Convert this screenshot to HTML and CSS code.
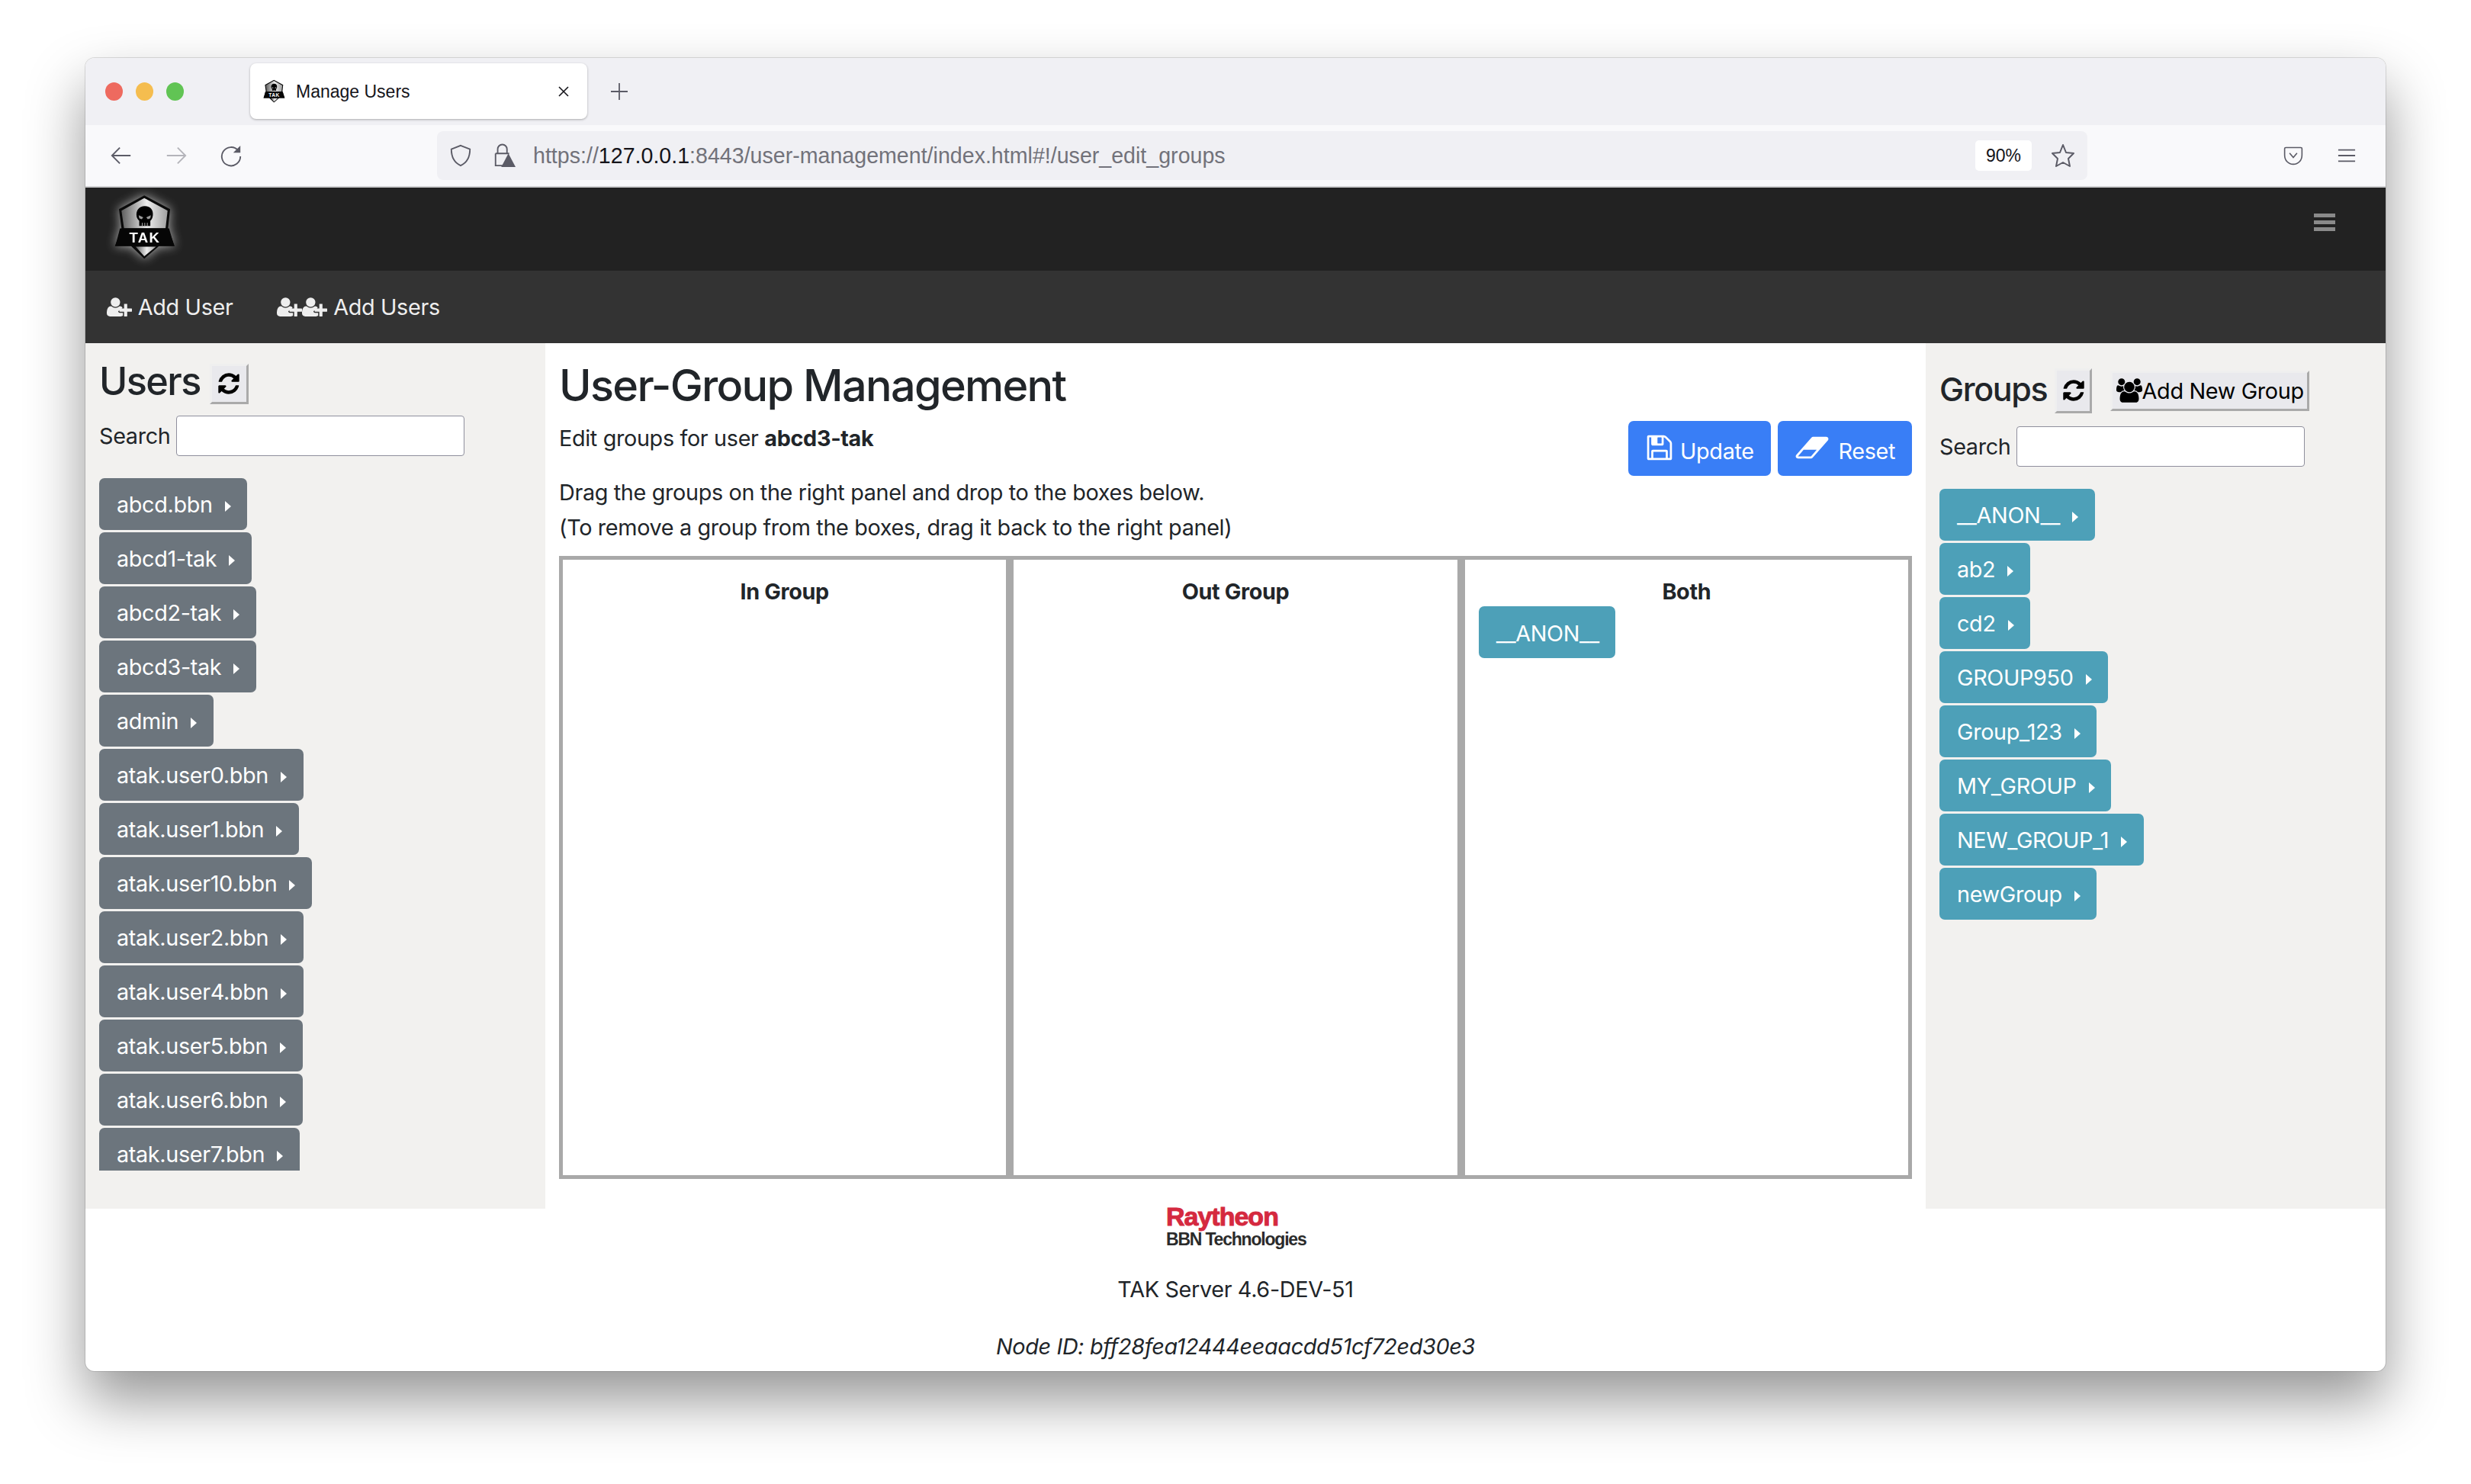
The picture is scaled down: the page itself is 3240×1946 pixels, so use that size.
FILE: index.html
```html
<!DOCTYPE html>
<html lang="en">
<head>
    <meta charset="UTF-8">
    <meta name="viewport" content="width=device-width, initial-scale=1.0">
    <title>Manage Users</title>
    <link rel="stylesheet" href="styles.css">
</head>
<body>

<svg class="icon-defs" width="0" height="0">
    <symbol id="i-refresh" viewBox="0 0 1792 1792"><path d="M1639 1056q0 5-1 7-64 268-268 434.5t-478 166.5q-146 0-282.5-55t-243.5-157l-129 129q-19 19-45 19t-45-19-19-45v-448q0-26 19-45t45-19h448q26 0 45 19t19 45-19 45l-137 137q71 66 161 102t187 36q134 0 250-65t186-179q11-17 53-117 8-23 30-23h192q13 0 22.5 9.5t9.5 22.5zm25-800v448q0 26-19 45t-45 19h-448q-26 0-45-19t-19-45 19-45l138-138q-148-137-349-137-134 0-250 65t-186 179q-11 17-53 117-8 23-30 23h-199q-13 0-22.5-9.5t-9.5-22.5v-7q65-268 270-434.5t480-166.5q146 0 284 55.5t245 156.5l130-129q19-19 45-19t45 19 19 45z"/></symbol>
    <symbol id="i-user-plus" viewBox="0 0 2048 1792"><path d="M704 896q-159 0-271.500-112.500t-112.500-271.500 112.500-271.500 271.500-112.500 271.500 112.500 112.500 271.500-112.500 271.500-271.500 112.500zm960 128h352q13 0 22.500 9.500t9.500 22.500v192q0 13-9.500 22.500t-22.500 9.500h-352v352q0 13-9.500 22.500t-22.500 9.500h-192q-13 0-22.500-9.500t-9.500-22.500v-352h-352q-13 0-22.500-9.500t-9.500-22.500v-192q0-13 9.500-22.500t22.500-9.500h352v-352q0-13 9.500-22.500t22.500-9.500h192q13 0 22.500 9.500t9.500 22.500v352zm-736 224q0 52 38 90t90 38h256v238q-68 50-171 50h-874q-121 0-194-69t-73-190q0-53 3.500-103.500t14-109 26.500-108.500 43-97.500 62-81 85.500-53.500 111.500-20q19 0 39 17 79 61 154.500 91.500t164.500 30.500 164.500-30.500 154.500-91.500q20-17 39-17 78 0 133 33t86 99z"/></symbol>
    <symbol id="i-users" viewBox="0 0 1920 1792"><path d="M593 896q-162 5-265 128h-134q-82 0-138-40.500t-56-118.500q0-353 124-353 6 0 43.500 21t97.500 42.500 119 21.500q67 0 133-23-5 37-5 66 0 139 81 256zm1071 637q0 120-73 189.500t-194 69.500h-874q-121 0-194-69.500t-73-189.500q0-53 3.500-103.500t14-109 26.500-108.500 43-97.500 62-81 85.500-53.500 111.500-20q10 0 43 21.500t73 48 107 48 135 21.500 135-21.500 107-48 73-48 43-21.500q61 0 111.500 20t85.500 53.500 62 81 43 97.500 26.500 108.500 14 109 3.500 103.500zm-1024-1277q0 106-75 181t-181 75-181-75-75-181 75-181 181-75 181 75 75 181zm704 384q0 159-112.500 271.500t-271.500 112.500-271.500-112.500-112.500-271.500 112.500-271.500 271.500-112.500 271.500 112.500 112.500 271.500zm576 225q0 78-56 118.500t-138 40.500h-134q-103-123-265-128 81-117 81-256 0-29-5-66 66 23 133 23 59 0 119-21.500t97.500-42.500 43.500-21q124 0 124 353zm-128-609q0 106-75 181t-181 75-181-75-75-181 75-181 181-75 181 75 75 181z"/></symbol>
    <symbol id="i-save" viewBox="0 0 1792 1792"><path d="M512 1536h768v-384h-768v384zm896 0h128v-896q0-14-10-38.500t-20-34.500l-281-281q-10-10-34-20t-39-10v416q0 40-28 68t-68 28h-576q-40 0-68-28t-28-68v-416h-128v1280h128v-416q0-40 28-68t68-28h832q40 0 68 28t28 68v416zm-384-928v-320q0-13-9.500-22.500t-22.500-9.500h-192q-13 0-22.500 9.500t-9.500 22.500v320q0 13 9.500 22.500t22.500 9.500h192q13 0 22.500-9.500t9.500-22.500zm640 32v928q0 40-28 68t-68 28h-1344q-40 0-68-28t-28-68v-1344q0-40 28-68t68-28h928q40 0 88 20t76 48l280 280q28 28 48 76t20 88z"/></symbol>
    <symbol id="i-eraser" viewBox="0 0 2048 1792"><path d="M960 1408l336-384h-768l-336 384h768zm1013-1077q15 34 9.500 71.500t-30.500 65.500l-896 1024q-38 44-96 44h-768q-38 0-69.500-20.500t-47.500-54.500q-15-34-9.500-71.500t30.500-65.500l896-1024q38-44 96-44h768q38 0 70 20.500t47 54.500z"/></symbol>
    <symbol id="i-shield" viewBox="60 22 245 256">
        <path d="M180 26 L282 80 L274 155 L300 226 L238 226 L180 276 L128 226 L64 226 L90 155 L80 80 Z" fill="#0a0a0a"/>
        <path d="M180 36 L272 86 L264 155 L100 155 L90 86 Z" fill="url(#shieldFill)"/>
        <path d="M146 228 L226 228 L180 266 Z" fill="url(#shieldFill)"/>
        <path d="M182 68 C205 68 216 84 214 104 C213 116 208 122 204 126 L204 146 L160 146 L160 126 C154 120 149 114 149 102 C149 84 160 68 182 68 Z" fill="#000"/>
        <path d="M158 104 L176 112 L170 120 L160 116 Z M206 104 L188 112 L194 120 L204 116 Z" fill="#999"/>
        <path d="M172 134 V146 M182 134 V146 M192 134 V146" stroke="#aaa" stroke-width="3"/>
        <path d="M84 156 L278 156 L298 225 L66 225 Z" fill="#060606"/>
    </symbol>
    <linearGradient id="shieldFill" x1="0" y1="0" x2="1" y2="0">
        <stop offset="0" stop-color="#5e5e5e"/>
        <stop offset="0.55" stop-color="#eeeeee"/>
        <stop offset="1" stop-color="#a0a0a0"/>
    </linearGradient>
</svg>

<div class="window">

    <div class="tabbar">
        <div class="lights">
            <span class="light red"></span>
            <span class="light yellow"></span>
            <span class="light green"></span>
        </div>
        <div class="tab">
            <svg class="tab-icon" viewBox="60 22 245 256"><use href="#i-shield" x="60" y="22" width="245" height="256"/><text x="182" y="212" class="tak-word">TAK</text></svg>
            <span class="tab-title">Manage Users</span>
            <svg class="tab-close" viewBox="0 0 16 16"><path d="M2 2 L14 14 M14 2 L2 14"/></svg>
        </div>
        <svg class="new-tab" viewBox="0 0 24 24"><path d="M12 1 V23 M1 12 H23"/></svg>
    </div>

    <div class="toolbar">
        <svg class="tool-icon back" viewBox="0 0 32 32"><path d="M29 16 H4 M14 5 L3 16 L14 27"/></svg>
        <svg class="tool-icon forward" viewBox="0 0 32 32"><path d="M3 16 H28 M18 5 L29 16 L18 27"/></svg>
        <svg class="tool-icon reload" viewBox="0 0 32 32"><path d="M26 9 A13 13 0 1 0 29 17"/><path class="solid" d="M29 2 V12 H19 Z"/></svg>
        <div class="urlbar">
            <svg class="tool-icon shield" viewBox="0 0 32 32"><path d="M16 2 L29 7 C29 18 25 26 16 30 C7 26 3 18 3 7 Z"/></svg>
            <svg class="tool-icon lock" viewBox="0 0 32 36"><path d="M7 15 V9 A6.500 6.500 0 0 1 20 9 V15 M4 15 H23 M4 15 V32 H14"/><path class="solid" d="M22 15 L32 34 H12 Z"/></svg>
            <div class="url"><span class="url-dim">https://</span>127.0.0.1<span class="url-dim">:8443/user-management/index.html#!/user_edit_groups</span></div>
            <div class="zoom-chip">90%</div>
            <svg class="tool-icon star" viewBox="0 0 32 32"><path d="M16 2 L20 12 L30 13 L23 20 L25 30 L16 25 L7 30 L9 20 L2 13 L12 12 Z"/></svg>
        </div>
        <svg class="tool-icon pocket" viewBox="0 0 32 32"><path d="M4 3 H28 A2 2 0 0 1 30 5 V15 C30 24 24 30 16 30 C8 30 2 24 2 15 V5 A2 2 0 0 1 4 3 Z M10 12 L16 19 L22 12"/></svg>
        <svg class="tool-icon app-menu" viewBox="0 0 26 20"><path d="M1 2 H25 M1 10 H25 M1 18 H25"/></svg>
    </div>

    <nav class="navbar">
        <svg class="navbar-logo" viewBox="60 22 245 256"><use href="#i-shield" x="60" y="22" width="245" height="256"/><text x="182" y="212" class="tak-word">TAK</text></svg>
        <span class="navbar-toggler"><i></i><i></i><i></i></span>
    </nav>

    <div class="subnav">
        <a class="subnav-link"><svg class="fa user-plus"><use href="#i-user-plus"/></svg> Add User</a>
        <a class="subnav-link"><svg class="fa user-plus"><use href="#i-user-plus"/></svg><svg class="fa user-plus"><use href="#i-user-plus"/></svg> Add Users</a>
    </div>

    <div class="content">
        <aside class="side users-side">
            <div class="side-head">
                <h3 class="users-title">Users</h3>
                <button class="plain-btn refresh-btn"><svg class="fa"><use href="#i-refresh"/></svg></button>
            </div>
            <div class="search-row">
                <label>Search</label>
                <input type="text" class="search-input">
            </div>
            <div class="btn-list">
                <button class="btn btn-secondary">abcd.bbn</button>
                <button class="btn btn-secondary">abcd1-tak</button>
                <button class="btn btn-secondary">abcd2-tak</button>
                <button class="btn btn-secondary">abcd3-tak</button>
                <button class="btn btn-secondary">admin</button>
                <button class="btn btn-secondary">atak.user0.bbn</button>
                <button class="btn btn-secondary">atak.user1.bbn</button>
                <button class="btn btn-secondary">atak.user10.bbn</button>
                <button class="btn btn-secondary">atak.user2.bbn</button>
                <button class="btn btn-secondary">atak.user4.bbn</button>
                <button class="btn btn-secondary">atak.user5.bbn</button>
                <button class="btn btn-secondary">atak.user6.bbn</button>
                <button class="btn btn-secondary">atak.user7.bbn</button>
            </div>
        </aside>

        <main class="main">
            <h2 class="main-title">User-Group Management</h2>
            <div class="main-row">
                <div class="edit-line">Edit groups for user <b>abcd3-tak</b></div>
                <div class="actions">
                    <button class="action-btn"><svg class="fa save"><use href="#i-save"/></svg> Update</button>
                    <button class="action-btn"><svg class="fa eraser"><use href="#i-eraser"/></svg> Reset</button>
                </div>
            </div>
            <p class="hint">Drag the groups on the right panel and drop to the boxes below.<br>(To remove a group from the boxes, drag it back to the right panel)</p>
            <div class="drop-boxes">
                <div class="drop-box"><div class="drop-title">In Group</div></div>
                <div class="drop-box"><div class="drop-title">Out Group</div></div>
                <div class="drop-box">
                    <div class="drop-title">Both</div>
                    <button class="btn btn-info no-caret">__ANON__</button>
                </div>
            </div>
        </main>

        <aside class="side groups-side">
            <div class="side-head">
                <h3 class="groups-title">Groups</h3>
                <button class="plain-btn refresh-btn group-refresh"><svg class="fa"><use href="#i-refresh"/></svg></button>
                <button class="plain-btn add-group"><svg class="fa users"><use href="#i-users"/></svg>Add New Group</button>
            </div>
            <div class="search-row">
                <label>Search</label>
                <input type="text" class="search-input">
            </div>
            <div class="btn-list">
                <button class="btn btn-info">__ANON__</button>
                <button class="btn btn-info">ab2</button>
                <button class="btn btn-info">cd2</button>
                <button class="btn btn-info">GROUP950</button>
                <button class="btn btn-info">Group_123</button>
                <button class="btn btn-info">MY_GROUP</button>
                <button class="btn btn-info">NEW_GROUP_1</button>
                <button class="btn btn-info">newGroup</button>
            </div>
        </aside>
    </div>

    <footer class="footer">
        <div class="brand">
            <div class="brand-red">Raytheon</div>
            <div class="brand-black">BBN Technologies</div>
        </div>
        <div class="version">TAK Server 4.6-DEV-51</div>
        <div class="node"><i>Node ID: bff28fea12444eeaacdd51cf72ed30e3</i></div>
    </footer>
</div>

</body>
</html>
```

FILE: styles.css
```css
* {
    margin: 0;
    padding: 0;
    box-sizing: border-box;
}

body {
    background: #fff;
    font-family: Inter, "Liberation Sans", sans-serif;
    font-size: 28.8px;
    letter-spacing: -0.35px;
    color: #212529;
    padding: 76px 112px 0;
    height: 1946px;
    overflow: hidden;
}

.icon-defs {
    position: absolute;
}

.tak-word {
    font-family: "Liberation Sans", sans-serif;
    font-weight: 700;
    font-size: 56px;
    letter-spacing: 4px;
    fill: #fff;
    text-anchor: middle;
}

.window {
    width: 3016px;
    height: 1722px;
    background: #fff;
    border-radius: 12px;
    overflow: hidden;
    box-shadow: 0 0 0 1px rgba(0, 0, 0, 0.12), 0 38px 76px rgba(0, 0, 0, 0.42);
    display: flex;
    flex-direction: column;
}

/* browser chrome */
.tabbar {
    height: 88px;
    background: #f0f0f4;
    display: flex;
    align-items: center;
    flex: none;
}

.lights {
    display: flex;
    gap: 17px;
    padding-left: 26px;
    width: 216px;
    margin-top: -1px;
}

.light {
    width: 23px;
    height: 24px;
    border-radius: 50%;
}

.red { background: #ee6a5f; }
.yellow { background: #f5bd4f; }
.green { background: #61c454; }

.tab {
    width: 442px;
    height: 73px;
    background: #fff;
    border-radius: 8px;
    box-shadow: 0 1px 3px rgba(0, 0, 0, 0.3);
    display: flex;
    align-items: center;
    padding: 0 23px 0 17px;
    margin-top: -1px;
}

.tab-icon {
    width: 29px;
    height: 31px;
    flex: none;
}

.tab-title {
    font-family: "Liberation Sans", sans-serif;
    font-size: 23px;
    letter-spacing: 0;
    color: #15141a;
    margin: 2px 0 0 14px;
    flex: 1;
}

.tab-close {
    width: 16px;
    height: 16px;
    fill: none;
    stroke: #15141a;
    stroke-width: 1.6;
}

.new-tab {
    width: 24px;
    height: 24px;
    margin-left: 30px;
    fill: none;
    stroke: #5b5b66;
    stroke-width: 1.8;
}

.toolbar {
    height: 82px;
    background: #f9f9fb;
    border-bottom: 2px solid #cfcfd1;
    display: flex;
    align-items: center;
    flex: none;
    padding-left: 32px;
}

.tool-icon {
    fill: none;
    stroke: #5b5b66;
    stroke-width: 2;
    flex: none;
}

.tool-icon .solid {
    fill: #5b5b66;
    stroke: none;
}

.back, .forward, .reload {
    width: 30px;
    height: 30px;
    margin-right: 42px;
}

.forward {
    stroke: #b4b4ba;
}

.reload {
    margin-right: 0;
}

.urlbar {
    width: 2164px;
    height: 64px;
    margin-left: 255px;
    background: #f0f0f4;
    border-radius: 8px;
    display: flex;
    align-items: center;
    padding-left: 16px;
}

.shield {
    width: 30px;
    height: 32px;
}

.lock {
    width: 30px;
    height: 34px;
    margin-left: 27px;
}

.url {
    font-family: "Liberation Sans", sans-serif;
    font-size: 28.6px;
    letter-spacing: 0;
    color: #15141a;
    margin-left: 23px;
    flex: 1;
    white-space: nowrap;
}

.url-dim {
    color: #72727a;
}

.zoom-chip {
    width: 74px;
    height: 40px;
    background: #fff;
    border-radius: 5px;
    font-family: "Liberation Sans", sans-serif;
    font-size: 23px;
    letter-spacing: 0;
    color: #15141a;
    display: flex;
    align-items: center;
    justify-content: center;
    flex: none;
}

.star {
    width: 32px;
    height: 32px;
    margin: 0 16px 0 25px;
    stroke-linejoin: round;
}

.pocket {
    width: 28px;
    height: 26px;
    margin-left: 256px;
}

.app-menu {
    width: 24px;
    height: 20px;
    margin-left: 44px;
}

/* page nav */
.navbar {
    height: 109px;
    background: #222;
    flex: none;
    display: flex;
    align-items: flex-start;
    justify-content: space-between;
    padding: 9px 66px 0 37px;
}

.navbar-logo {
    width: 82px;
    height: 85px;
    filter: drop-shadow(0 0 7px rgba(255, 255, 255, 0.65));
}

.navbar-toggler {
    display: flex;
    flex-direction: column;
    gap: 4px;
    padding-top: 25px;
}

.navbar-toggler i {
    display: block;
    width: 28px;
    height: 5px;
    background: #8a8a8a;
}

.subnav {
    height: 95px;
    background: #333;
    flex: none;
    display: flex;
    align-items: center;
    gap: 58px;
    padding-left: 28px;
}

.subnav-link {
    color: #eee;
    white-space: nowrap;
}

.fa {
    fill: currentColor;
    width: 32px;
    height: 32px;
    vertical-align: -4px;
}

.user-plus {
    width: 33px;
    height: 29px;
}

/* three columns */
.content {
    height: 1135px;
    display: flex;
    flex: none;
}

.side {
    background: #f2f1ef;
    flex: none;
    padding-left: 18px;
}

.users-side {
    width: 603px;
}

.groups-side {
    width: 603px;
}

.side-head {
    display: flex;
    align-items: center;
}

.users-side .side-head {
    padding-top: 23px;
    height: 83px;
}

.groups-side .side-head {
    padding-top: 32px;
    height: 92px;
}

.users-title {
    font-size: 50.4px;
    font-weight: 500;
    line-height: 1.2;
    letter-spacing: -1.6px;
    margin-top: -6px;
}

.groups-title {
    font-size: 43px;
    font-weight: 500;
    line-height: 1.2;
    letter-spacing: -1.4px;
    margin-top: -2px;
}

.plain-btn {
    font-family: inherit;
    font-size: 28.8px;
    letter-spacing: inherit;
    color: #000;
    background: #e9e9ed;
    border: 3px solid;
    border-color: #efefef #aaa #aaa #efefef;
}

.refresh-btn {
    width: 51px;
    height: 53px;
    margin-left: 12px;
    display: flex;
    align-items: center;
    justify-content: center;
}

.group-refresh {
    width: 49px;
    height: 59px;
    margin-left: 10px;
}

.add-group {
    width: 261px;
    height: 53px;
    margin-left: 24px;
    white-space: nowrap;
    display: flex;
    align-items: center;
    justify-content: center;
}

.users {
    width: 34px;
    flex: none;
}

.search-row {
    display: flex;
    align-items: center;
    gap: 8px;
}

.users-side .search-row {
    margin-top: 12px;
}

.groups-side .search-row {
    margin-top: 17px;
}

.search-input {
    width: 378px;
    height: 53px;
    background: #fff;
    border: 1.5px solid #8f8f9d;
    border-radius: 4px;
}

.btn-list {
    display: flex;
    flex-direction: column;
    align-items: flex-start;
    gap: 3px;
    overflow: hidden;
}

.users-side .btn-list {
    margin-top: 29px;
    height: 908px;
}

.groups-side .btn-list {
    margin-top: 29px;
}

.btn {
    font-family: inherit;
    font-size: 28.8px;
    letter-spacing: inherit;
    line-height: 43.2px;
    height: 68px;
    padding: 12px 21.6px 10px 23px;
    color: #fff;
    border: none;
    border-radius: 7px;
    white-space: nowrap;
    flex: none;
    display: inline-flex;
    align-items: center;
}

.btn::after {
    content: "";
    display: inline-block;
    margin-left: 16px;
    margin-top: 3px;
    border-left: 8px solid currentColor;
    border-top: 7px solid transparent;
    border-bottom: 7px solid transparent;
}

.no-caret::after {
    display: none;
}

.btn-secondary { background: #6c757d; }
.btn-info { background: #4da0b8; }

/* center */
.main {
    flex: 1;
    padding: 0 18px;
    min-width: 0;
}

.main-title {
    font-size: 57.6px;
    font-weight: 500;
    line-height: 1.2;
    letter-spacing: -1.7px;
    padding-top: 21px;
}

.main-row {
    display: flex;
    justify-content: space-between;
    align-items: flex-start;
    height: 83px;
}

.edit-line {
    margin-top: 17px;
}

.actions {
    display: flex;
    gap: 9px;
    margin-top: 12px;
}

.action-btn {
    font-family: inherit;
    font-size: 28.8px;
    letter-spacing: inherit;
    height: 72px;
    padding: 0 22px;
    background: #397ef6;
    color: #fff;
    border: none;
    border-radius: 7px;
    white-space: nowrap;
}

.save {
    width: 38px;
    height: 38px;
    vertical-align: -4px;
}

.eraser {
    width: 46px;
    height: 40px;
    vertical-align: -5px;
    margin-right: 4px;
}

.hint {
    line-height: 46px;
}

.drop-boxes {
    display: flex;
    height: 817px;
    margin-top: 14px;
}

.drop-box {
    flex: 1;
    border: 5px solid #a9a9a9;
    padding: 0 18px;
}

.drop-title {
    font-weight: 700;
    text-align: center;
    line-height: 34px;
    margin-top: 25px;
    margin-bottom: 2px;
}

/* footer */
.footer {
    flex: 1;
    display: flex;
    flex-direction: column;
    align-items: center;
}

.brand {
    margin-top: -8px;
    width: 182px;
    white-space: nowrap;
}

.brand-red {
    font-family: "Liberation Sans", sans-serif;
    font-weight: 700;
    font-size: 34px;
    line-height: 36px;
    letter-spacing: -1px;
    color: #d5293f;
    -webkit-text-stroke: 1px #d5293f;
}

.brand-black {
    font-family: "Liberation Sans", sans-serif;
    font-weight: 700;
    font-size: 23px;
    line-height: 24px;
    letter-spacing: -1.2px;
    color: #2b2b2b;
}

.version {
    margin-top: 36px;
}

.node {
    margin-top: 40px;
}
```
